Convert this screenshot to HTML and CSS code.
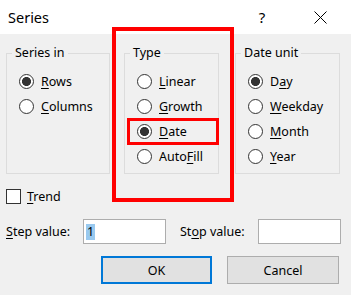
FILE: index.html
```html
<!DOCTYPE html>
<html>
<head>
<meta charset="utf-8">
<title>Series</title>
<link rel="stylesheet" href="styles.css">
</head>
<body>
<div class="dialog">
  <div class="titlebar">
    <span class="title">Series</span>
    <span class="help">?</span>
    <span class="close"><svg width="13" height="13" viewBox="0 0 13 13"><path d="M0.5 0.5L12.5 12.5M12.5 0.5L0.5 12.5" stroke="#000" stroke-width="1" fill="none"/></svg></span>
  </div>
  <div class="groups">
    <fieldset class="group g-series">
      <legend>Series in</legend>
      <div class="opt"><span class="radio checked"></span><span><u>R</u>ows</span></div>
      <div class="opt"><span class="radio"></span><span><u>C</u>olumns</span></div>
    </fieldset>
    <fieldset class="group g-type">
      <legend>Type</legend>
      <div class="opt"><span class="radio"></span><span><u>L</u>inear</span></div>
      <div class="opt"><span class="radio"></span><span><u>G</u>rowth</span></div>
      <div class="opt"><span class="radio checked"></span><span><u>D</u>ate</span></div>
      <div class="opt"><span class="radio"></span><span>Auto<u>F</u>ill</span></div>
    </fieldset>
    <fieldset class="group g-unit">
      <legend>Date unit</legend>
      <div class="opt"><span class="radio checked"></span><span>D<u>a</u>y</span></div>
      <div class="opt"><span class="radio"></span><span><u>W</u>eekday</span></div>
      <div class="opt"><span class="radio"></span><span><u>M</u>onth</span></div>
      <div class="opt"><span class="radio"></span><span><u>Y</u>ear</span></div>
    </fieldset>
  </div>
  <div class="trend"><span class="check"></span><span><u>T</u>rend</span></div>
  <div class="values">
    <span class="lbl lbl-step"><u>S</u>tep value:</span>
    <span class="input"><span class="sel">1</span></span>
    <span class="lbl lbl-stop">St<u>o</u>p value:</span>
    <span class="input"></span>
  </div>
  <div class="buttons">
    <span class="btn btn-ok">OK</span>
    <span class="btn btn-cancel">Cancel</span>
  </div>
  <div class="mark mark-type"></div>
  <div class="mark mark-date"></div>
</div>
</body>
</html>
```

FILE: styles.css
```css
* { box-sizing: border-box; }
html, body { margin: 0; padding: 0; }
body { background: #f0f0f0; }

.dialog {
  position: relative;
  width: 351px;
  height: 295px;
  background: #f0f0f0;
  font-family: "Noto Sans", "Open Sans", sans-serif;
  font-size: 12.5px;
  color: #000;
  overflow: hidden;
}

u { text-decoration: underline; text-underline-offset: 2px; text-decoration-thickness: 1px; }

.titlebar {
  height: 34px;
  background: #fff;
  display: flex;
  align-items: center;
  padding-left: 8px;
}
.title { flex: 1; font-size: 14.5px; }
.help {
  width: 46px;
  margin-right: 12px;
  text-align: center;
  font-size: 15px;
}
.close {
  width: 46px;
  margin-right: 8px;
  display: flex;
  justify-content: center;
  align-items: center;
}

.groups {
  display: flex;
  align-items: flex-start;
  padding: 9px 0 0 6px;
}
.group {
  margin: 0;
  padding: 6px 0 0 0;
  border: 1px solid #dcdcdc;
  height: 131px;
  min-width: 0;
}
.group legend {
  margin-left: 5px;
  padding: 0 3px;
  height: 20px;
  line-height: 20px;
}
.g-series { width: 104px; }
.g-type { width: 95px; margin-left: 14px; }
.g-unit { width: 105px; margin-left: 16px; }

.opt {
  display: flex;
  align-items: center;
  height: 25px;
  padding-left: 12px;
  gap: 7px;
}
.radio {
  width: 15px;
  height: 15px;
  border: 1px solid #333;
  border-radius: 50%;
  background: #fff;
  flex: none;
}
.radio.checked {
  background: radial-gradient(circle, #333 0 4.2px, #fff 4.8px);
}

.trend {
  display: flex;
  align-items: center;
  gap: 6px;
  height: 15px;
  margin-top: 15px;
  padding-left: 6px;
}
.check {
  width: 15px;
  height: 15px;
  border: 1px solid #333;
  background: #fff;
  flex: none;
}

.values {
  display: flex;
  align-items: center;
  margin-top: 15px;
  padding-left: 6px;
  height: 25px;
}
.lbl-step { width: 77px; }
.lbl-stop { width: 78px; margin-left: 14px; }
.input {
  width: 83px;
  height: 25px;
  border: 1px solid #adadad;
  background: #fff;
  display: flex;
  align-items: center;
  padding-left: 2px;
}
.sel {
  background: #99c9ef;
  color: #000;
  height: 16px;
  line-height: 16px;
  padding: 0 1px;
}

.buttons {
  display: flex;
  gap: 15px;
  margin-top: 12px;
  padding-left: 101px;
}
.btn {
  width: 112px;
  height: 28px;
  background: #e1e1e1;
  border: 1px solid #adadad;
  display: flex;
  align-items: center;
  justify-content: center;
}
.btn-ok { width: 111px; border: 2px solid #0078d7; }

.mark {
  position: absolute;
  border: 4px solid #ff0000;
  pointer-events: none;
}
.mark-type { left: 112px; top: 27px; width: 122px; height: 175px; }
.mark-date { left: 127px; top: 118px; width: 92px; height: 27px; border-width: 3px; }
```
